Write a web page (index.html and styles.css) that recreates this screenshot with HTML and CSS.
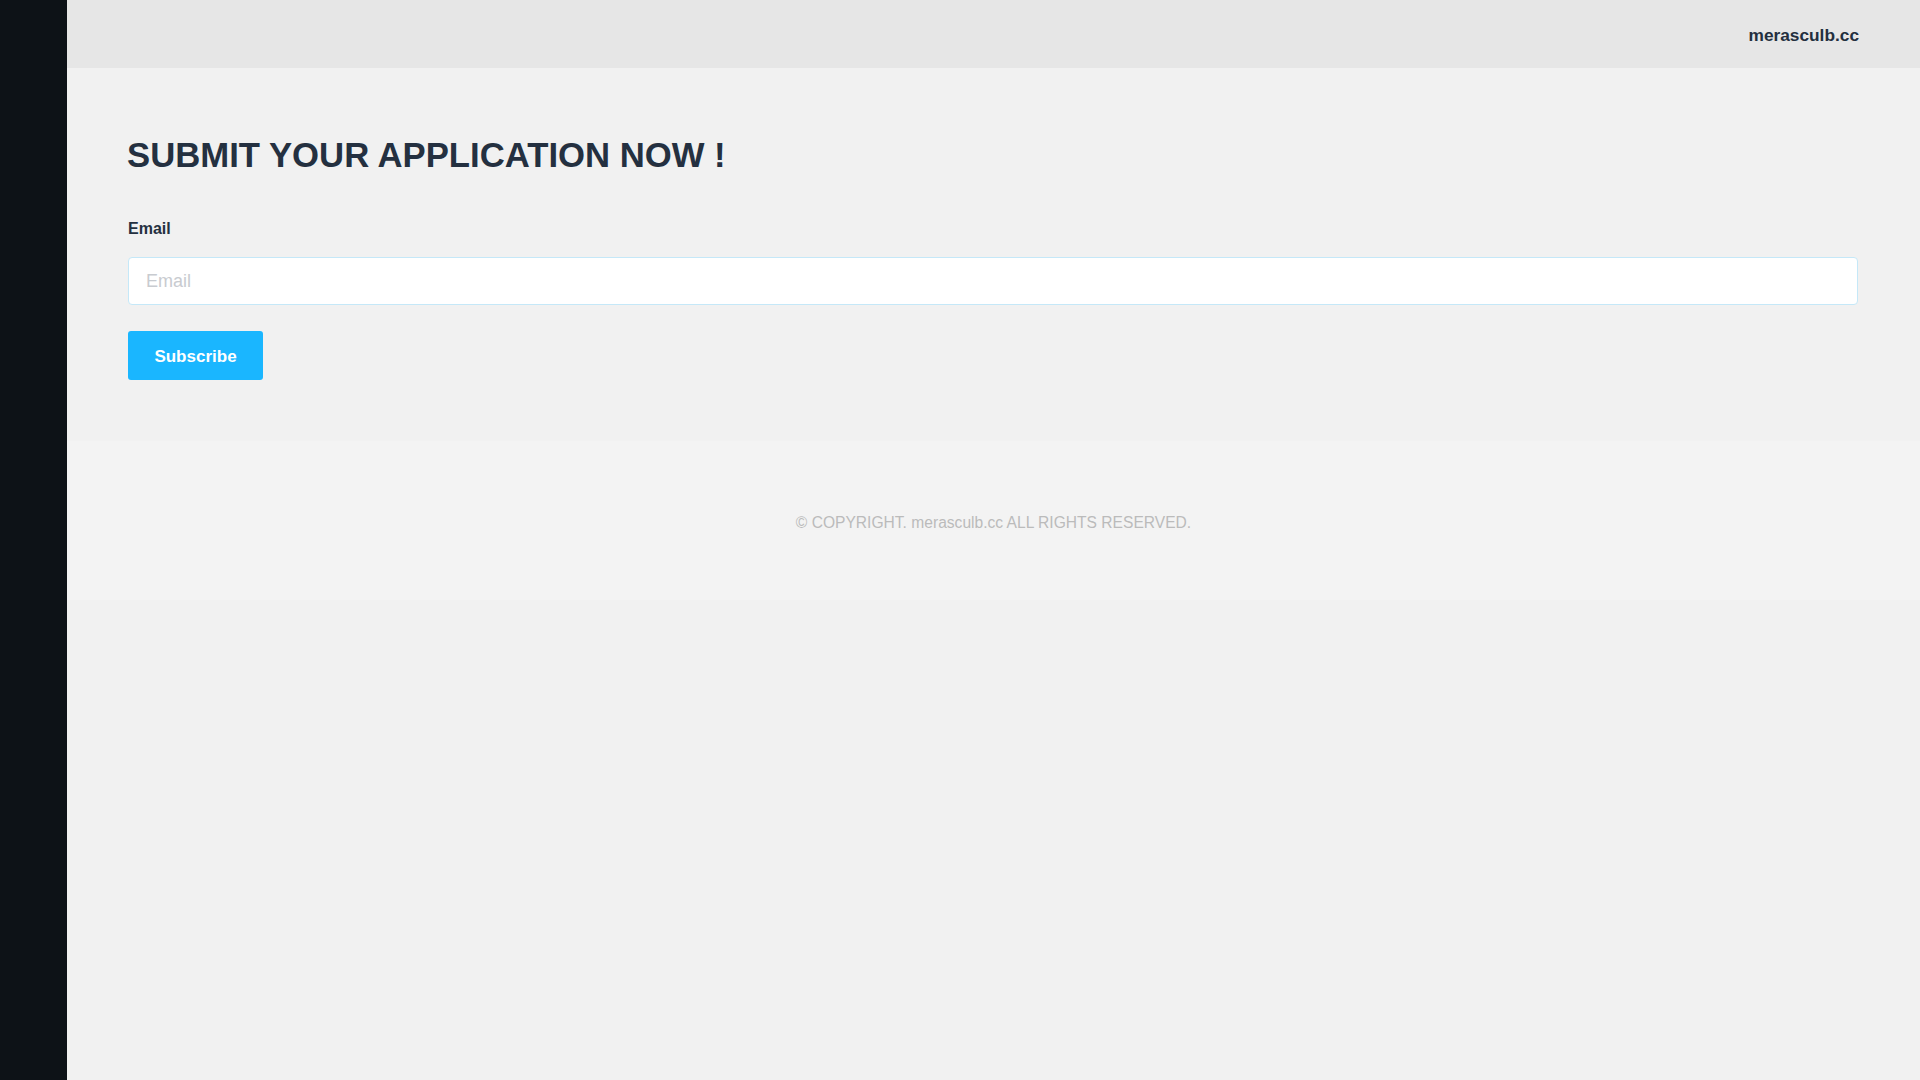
FILE: index.html
```html
<!DOCTYPE html>
<html lang="en">
<head>
<meta charset="utf-8">
<title>merasculb.cc</title>
<link rel="stylesheet" href="styles.css">
</head>
<body>
<div class="layout">
  <aside class="sidebar"></aside>
  <div class="page">
    <header class="topbar">
      <span class="brand">merasculb.cc</span>
    </header>
    <main class="content">
      <h1 class="title">SUBMIT YOUR APPLICATION NOW !</h1>
      <form class="form" onsubmit="return false;">
        <label class="label" for="email">Email</label>
        <input class="input" id="email" type="email" placeholder="Email">
        <button class="btn" type="submit">Subscribe</button>
      </form>
    </main>
    <footer class="footer">© COPYRIGHT. merasculb.cc ALL RIGHTS RESERVED.</footer>
  </div>
</div>
</body>
</html>
```

FILE: styles.css
```css
html, body {
  margin: 0;
  padding: 0;
  background: #f1f1f1;
  font-family: "Liberation Sans", Arial, sans-serif;
}
.layout {
  display: flex;
  min-height: 100vh;
}
.sidebar {
  width: 67px;
  flex: 0 0 67px;
  background: #0d1217;
}
.page {
  flex: 1;
  display: flex;
  flex-direction: column;
  background: #f1f1f1;
}
.topbar {
  height: 68px;
  background: #e6e6e6;
  display: flex;
  align-items: center;
  justify-content: flex-end;
  padding: 2px 61px 0 61px;
  box-sizing: border-box;
}
.brand {
  font-size: 17.3px;
  font-weight: bold;
  color: #232f3e;
}
.content {
  padding: 67px 62px 0 60px;
}
.title {
  margin: 0;
  font-size: 34.7px;
  line-height: 40px;
  font-weight: bold;
  color: #243040;
}
.form {
  display: flex;
  flex-direction: column;
  align-items: flex-start;
  margin-top: 43px;
  padding-left: 1px;
}
.label {
  font-size: 16px;
  line-height: 20px;
  padding-top: 1px;
  font-weight: bold;
  color: #243040;
}
.input {
  margin-top: 18px;
  width: 100%;
  height: 48px;
  box-sizing: border-box;
  border: 1px solid #c5e8f8;
  border-radius: 4px;
  background: #fff;
  padding: 0 17px;
  font-family: "Liberation Sans", Arial, sans-serif;
  font-size: 18px;
  color: #333;
  outline: none;
}
.input::placeholder {
  color: #c8cbd0;
}
.btn {
  margin-top: 26px;
  width: 135px;
  height: 49px;
  border: none;
  border-radius: 3px;
  background: #1ab6ff;
  color: #fff;
  font-family: "Liberation Sans", Arial, sans-serif;
  font-size: 17px;
  font-weight: bold;
  padding: 2px 0 0 0;
  cursor: pointer;
}
.footer {
  margin-top: 61px;
  height: 159px;
  box-sizing: border-box;
  padding-top: 4px;
  background: #f3f3f3;
  display: flex;
  align-items: center;
  justify-content: center;
  font-size: 15.6px;
  color: #bbbbbb;
}
```
